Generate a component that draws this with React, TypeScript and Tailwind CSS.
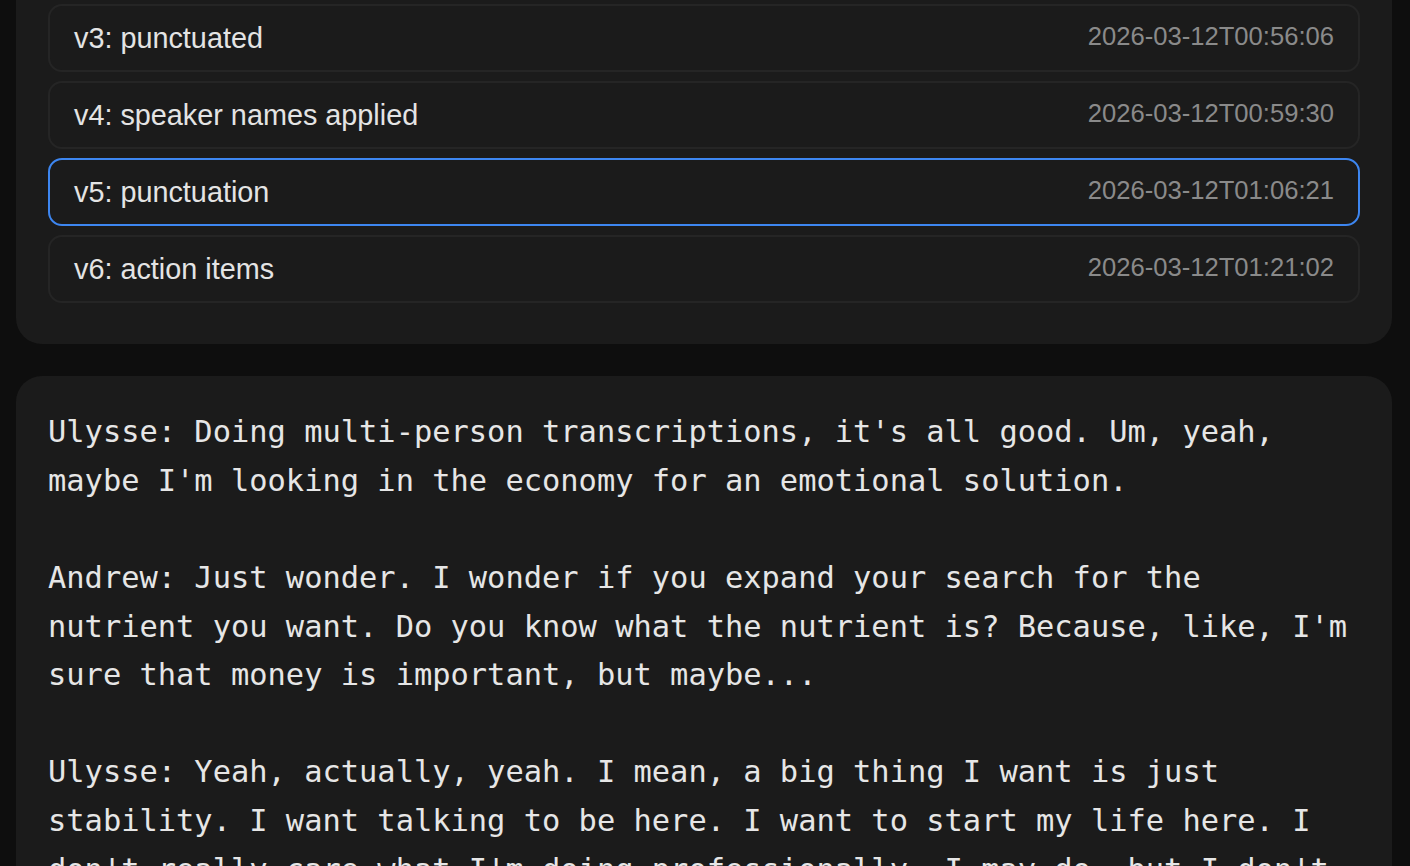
import React from "react"

const versions = [
  { label: "v3: punctuated", time: "2026-03-12T00:56:06" },
  { label: "v4: speaker names applied", time: "2026-03-12T00:59:30" },
  { label: "v5: punctuation", time: "2026-03-12T01:06:21", active: true },
  { label: "v6: action items", time: "2026-03-12T01:21:02" },
]

const transcript = `Ulysse: Doing multi-person transcriptions, it's all good. Um, yeah, maybe I'm looking in the economy for an emotional solution.

Andrew: Just wonder. I wonder if you expand your search for the nutrient you want. Do you know what the nutrient is? Because, like, I'm sure that money is important, but maybe...

Ulysse: Yeah, actually, yeah. I mean, a big thing I want is just stability. I want talking to be here. I want to start my life here. I don't really care what I'm doing professionally. I may do, but I don't have to. I just want to be somewhere I can stay.`

export default function App() {
  return (
    <div className="h-[866px] overflow-hidden bg-[#0e0e0e] pl-4 pr-[18px] font-['Liberation_Sans',Arial,sans-serif]">
      <section className="rounded-b-[26px] bg-[#1b1b1b] px-8 pt-1 pb-[41px]">
        <div className="flex flex-col gap-[9px]">
          {versions.map((v) => (
            <div
              key={v.label}
              className={
                v.active
                  ? "flex h-[68px] items-center justify-between rounded-[14px] border-2 border-[#3d86f0] bg-[#1b1b1b] px-6"
                  : "flex h-[68px] items-center justify-between rounded-[14px] border-2 border-[#252525] bg-[#1b1b1b] px-6"
              }
            >
              <span className="translate-y-[1px] text-[28.8px] text-[#e4e4e4]">{v.label}</span>
              <span className="-translate-y-[2px] text-[25.6px] text-[#8a8a8a]">{v.time}</span>
            </div>
          ))}
        </div>
      </section>

      <section className="mt-8 rounded-[26px] bg-[#1b1b1b] px-8 pt-8 pb-8">
        <p className="whitespace-pre-wrap font-['DejaVu_Sans_Mono',monospace] text-[30.4px] leading-[1.6] text-[#e6e6e6]">
          {transcript}
        </p>
      </section>
    </div>
  )
}
